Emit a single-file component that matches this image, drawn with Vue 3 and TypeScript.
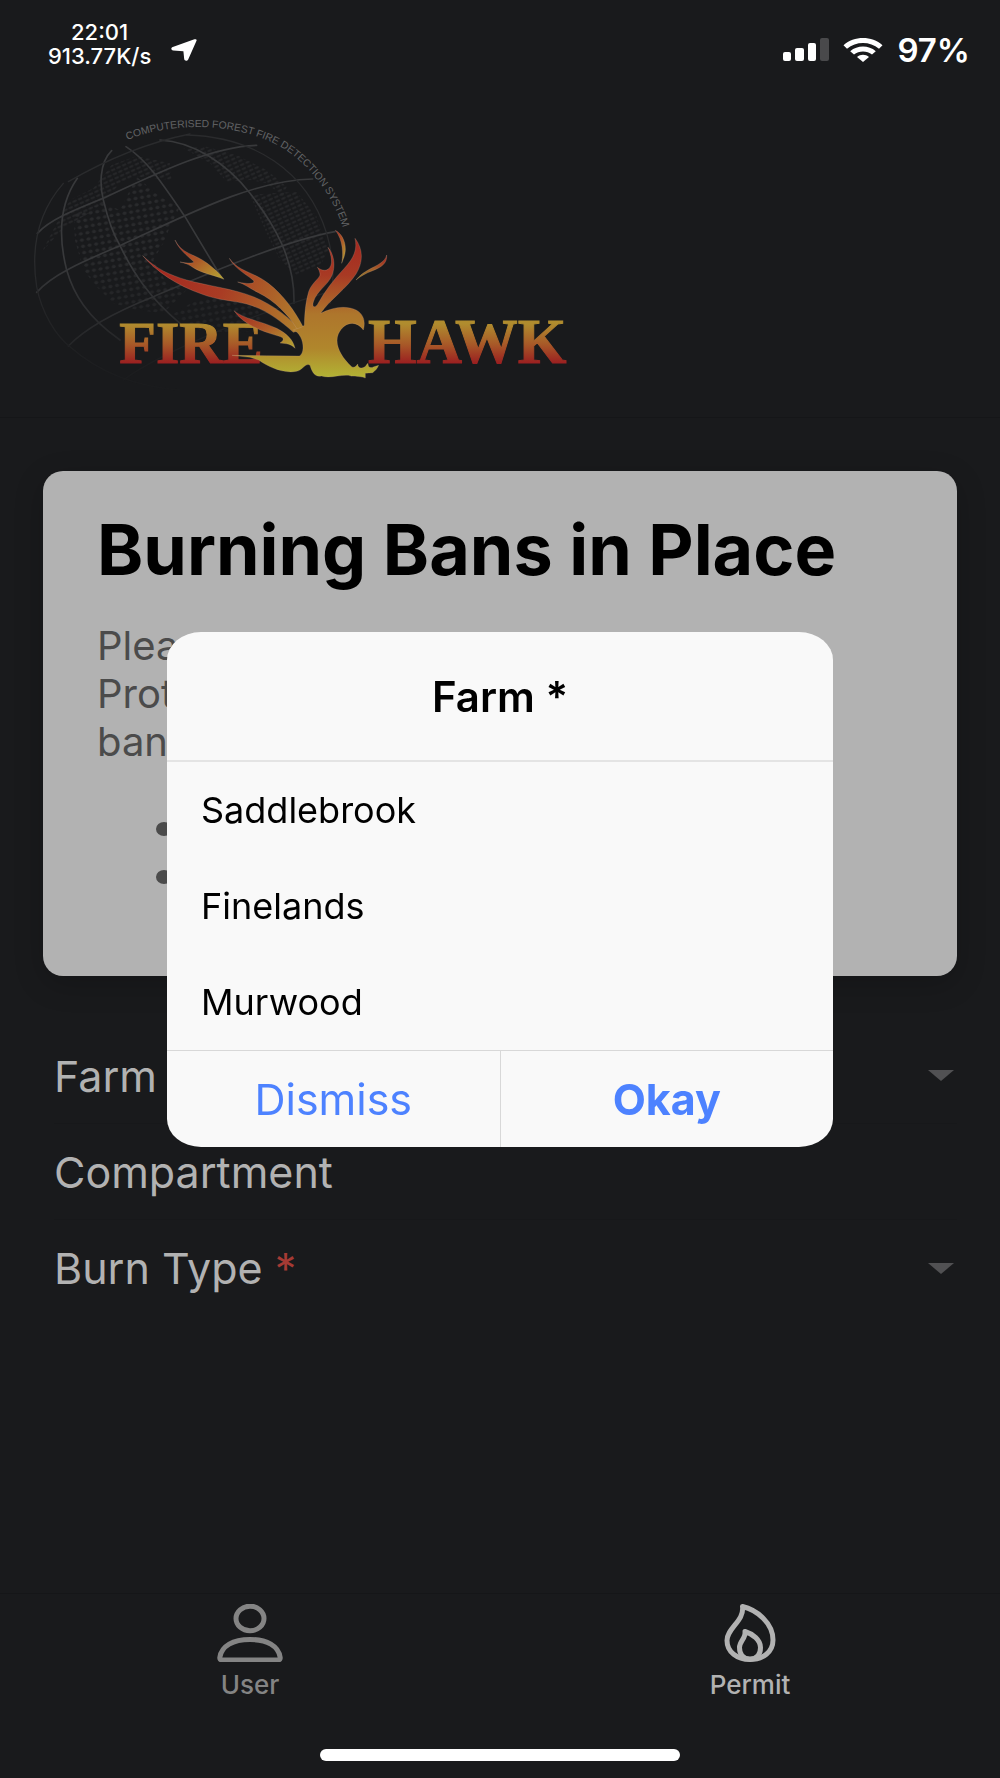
<script setup lang="ts">
import { ref } from 'vue'

interface Field {
  id: string
  label: string
  kind: 'select' | 'text'
  required: boolean
}

const fields: Field[] = [
  { id: 'farm', label: 'Farm', kind: 'select', required: false },
  { id: 'compartment', label: 'Compartment', kind: 'text', required: false },
  { id: 'burn-type', label: 'Burn Type', kind: 'select', required: true },
]

const farms: string[] = ['Saddlebrook', 'Finelands', 'Murwood']
const noticeLines: string[] = ['Plea', 'Prot', 'ban']

const chosenFarm = ref<string>('')
const dialogOpen = ref<boolean>(true)

function closeDialog(): void {
  dialogOpen.value = false
}
</script>

<template>
  <div class="screen">
    <div class="status">
      <div class="status-left">
        <div class="clock">
          <span>22:01</span>
          <span>913.77K/s</span>
        </div>
        <svg class="arrow" viewBox="0 0 26 22" aria-hidden="true">
          <path d="M25.5 1.8 17.2 20.4C16.3 22.3 13.4 22 13.2 20L12.4 12.3 2.2 11.4C-.2 11.1-.3 8.9 1.8 8L23.4.3C25 0 26 .6 25.5 1.8Z" fill="#fff" />
        </svg>
      </div>
      <div class="status-right">
        <svg class="bars" viewBox="0 0 46 24" aria-hidden="true">
          <rect x="0" y="14" width="8" height="9" rx="2" fill="#fff" />
          <rect x="12" y="10" width="9" height="13" rx="2" fill="#fff" />
          <rect x="25" y="5" width="8" height="18" rx="2" fill="#fff" />
          <rect x="37" y="0" width="9" height="23" rx="2" fill="#49494b" />
        </svg>
        <svg class="wifi" viewBox="0 0 40 24" aria-hidden="true">
          <path d="M.5 7.2C11-2.3 29-2.3 39.5 7.2L36 10.8C27 3.2 13 3.2 4 10.8Z" fill="#fff" />
          <path d="M7.2 13.2C14.5 7 25.5 7 32.8 13.2L29 16.6C24 12.5 16 12.5 11 16.6Z" fill="#fff" />
          <path d="M14 19C17.5 16 22.5 16 26 19L20 24Z" fill="#fff" />
        </svg>
        <span class="battery">97%</span>
      </div>
    </div>

    <header class="brand">
      <svg class="logo" viewBox="0 0 1740 900" role="img" aria-label="Firehawk">
        <defs>
          <linearGradient id="flame" gradientUnits="userSpaceOnUse" x1="0" y1="440" x2="0" y2="830">
            <stop offset="0" stop-color="#a52b21" />
            <stop offset=".22" stop-color="#a83a24" />
            <stop offset=".52" stop-color="#ae762c" />
            <stop offset=".78" stop-color="#b0862c" />
            <stop offset="1" stop-color="#b2b234" />
          </linearGradient>
          <linearGradient id="ember" gradientUnits="userSpaceOnUse" x1="368" y1="467" x2="840" y2="690">
            <stop offset="0" stop-color="#a3231f" />
            <stop offset=".5" stop-color="#a93c24" />
            <stop offset="1" stop-color="#b0802c" />
          </linearGradient>
          <linearGradient id="spark" x1="0" y1="0" x2="1" y2="1">
            <stop offset="0" stop-color="#a3231f" />
            <stop offset=".5" stop-color="#ad5a28" />
            <stop offset="1" stop-color="#b5a832" />
          </linearGradient>
          <linearGradient id="wisp" x1="1" y1="0" x2="0" y2="1">
            <stop offset="0" stop-color="#a3231f" />
            <stop offset=".5" stop-color="#a5602a" />
            <stop offset="1" stop-color="#8a7a28" />
          </linearGradient>
          <linearGradient id="letters" gradientUnits="userSpaceOnUse" x1="0" y1="672" x2="0" y2="792">
            <stop offset="0" stop-color="#b08c2e" />
            <stop offset=".5" stop-color="#a85a28" />
            <stop offset="1" stop-color="#9a1d20" />
          </linearGradient>
          <linearGradient id="fade" x1="0" y1="0" x2="0" y2="1">
            <stop offset=".5" stop-color="#fff" />
            <stop offset="1" stop-color="#000" />
          </linearGradient>
          <mask id="globe-mask" maskUnits="userSpaceOnUse" x="0" y="60" width="1000" height="840">
            <rect x="0" y="60" width="1000" height="840" fill="url(#fade)" />
          </mask>
          <pattern id="dots" width="20" height="19" patternUnits="userSpaceOnUse" patternTransform="rotate(-10)">
            <ellipse cx="10" cy="9" rx="6" ry="5" fill="#292a2c" />
          </pattern>
          <pattern id="dashes" width="18" height="13" patternUnits="userSpaceOnUse" patternTransform="rotate(-24)">
            <rect x="1" y="3" width="14" height="6" rx="3" fill="#27282a" />
          </pattern>
          <path id="motto" d="M322 120C480 56 690 72 812 160C895 225 948 310 974 400L980 430" />
        </defs>

        <g mask="url(#globe-mask)">
          <g>
            <path fill="url(#dashes)" d="M66 455L110 370 150 300 220 265 275 195 350 168 450 190 455 240 400 235 350 230 300 250 240 320 130 385Z" />
            <path fill="url(#dots)" d="M160 340L250 310 300 330 350 230 420 290 480 320 450 380 430 430 400 480 440 550 500 570 430 640 350 630 280 610 230 560 190 510 165 420Z" />
            <path fill="url(#dots)" d="M455 645L520 605 620 575 700 600 740 690 640 700 540 690Z" />
            <path fill="url(#dashes)" d="M490 145L560 140 650 165 740 210 800 260 790 290 740 250 690 240 620 245 570 190Z" />
            <path fill="url(#dashes)" d="M690 285L750 280 830 275 890 350 925 450 900 500 830 525 780 480 740 400Z" />
          </g>
          <g fill="none" stroke="#38393b" stroke-width="5" stroke-linecap="round">
            <path d="M318 140C380 180 420 240 495 350L600 525" />
            <path d="M275 152C236 190 240 260 250 300C262 350 278 400 300 437C340 520 390 595 480 670" />
            <path d="M172 235C120 310 112 400 140 510C160 580 200 650 300 720" />
            <path d="M420 120C520 125 620 190 690 280C765 375 825 480 822 610" />
            <path d="M52 400C90 360 150 335 250 295C400 225 570 140 710 136" />
            <path d="M50 577C100 520 200 480 300 437C500 345 700 240 878 237" />
            <path d="M145 738C200 680 300 630 400 590C520 540 780 425 945 395" />
          </g>
          <g fill="none" stroke="#2a2b2d" stroke-width="4" stroke-linecap="round">
            <path d="M130 250C60 330 30 430 50 560C65 640 110 710 150 740C240 820 350 860 480 870" />
            <path d="M500 105C700 110 860 210 920 400C944 480 942 560 930 610" />
            <path d="M145 245C240 190 370 130 510 102" />
            <path d="M310 840C420 760 700 640 930 575" />
          </g>
        </g>

        <text class="motto" fill="#626365">
          <textPath href="#motto">COMPUTERISED FOREST FIRE DETECTION SYSTEM</textPath>
        </text>

        <g fill="url(#letters)" stroke="url(#letters)" stroke-width="3">
          <text class="wordmark" x="298" y="790">FIRE</text>
          <text class="wordmark wide" x="1044" y="790">HAWK</text>
        </g>

        <g stroke="#d0a890" stroke-opacity=".35" stroke-width="2" stroke-linejoin="round">
          <path fill="url(#ember)" d="M368 467C410 508 450 525 500 540C560 557 640 566 700 590C760 614 810 655 842 690L820 697C780 660 730 625 680 612C640 602 590 600 545 582C470 556 410 515 368 467Z" />
          <path fill="url(#spark)" d="M465 420C488 465 520 458 562 490C588 510 602 524 612 538C580 524 545 520 520 503C506 492 495 490 480 486C500 489 517 491 522 486C500 466 475 446 465 420Z" />
          <path fill="url(#ember)" d="M628 475C655 515 700 515 745 550C790 585 824 632 850 682L832 688C806 645 764 602 715 578C690 566 675 552 653 546C682 552 702 553 702 543C690 530 645 508 628 475Z" />
          <path fill="url(#spark)" d="M642 632C672 657 720 662 770 685C800 700 820 720 825 745C814 732 800 731 780 729C796 718 792 712 768 706C720 692 670 672 642 632Z" />
          <path fill="url(#flame)" d="M820 690C832 684 842 686 853 676C854 640 856 610 866 575C876 546 902 534 900 522C899 514 896 508 892 502C902 510 914 514 924 508C942 494 934 466 924 442C944 466 946 500 936 526C924 556 890 572 880 606C876 620 882 626 892 614C914 574 940 540 972 506C1004 472 1012 446 1005 415C1030 448 1030 486 1008 522C980 566 928 600 902 640C930 626 960 618 990 624C1030 632 1038 662 1030 690C1010 660 972 664 955 702C942 734 964 772 995 800C1002 804 1008 800 1013 792C1014 804 1022 806 1032 802C1038 800 1038 794 1044 790C1044 802 1050 806 1062 800L1076 796C1072 806 1066 812 1058 818L1036 820 1036 834C1016 826 1000 832 985 826C960 824 930 836 904 828C884 832 876 816 870 796C858 786 846 812 830 814C790 822 744 800 716 780L690 772 636 766 740 767 838 768C852 762 852 730 842 712C836 700 830 694 820 690Z" />
          <path fill="url(#spark)" d="M946 391C964 400 978 424 976 452C974 472 968 480 965 490C970 466 970 420 946 391Z" />
          <path fill="url(#wisp)" d="M1100 465C1096 486 1070 496 1048 508C1030 518 1020 526 1008 540C1020 530 1036 520 1058 512C1084 502 1102 490 1100 465Z" />
        </g>
      </svg>
    </header>

    <main class="content">
      <section class="card">
        <h1>Burning Bans in Place</h1>
        <p>
          <template v-for="line in noticeLines" :key="line">{{ line }}<br /></template>
        </p>
        <ul>
          <li></li>
          <li></li>
        </ul>
      </section>

      <form class="fields" @submit.prevent>
        <div v-for="field in fields" :key="field.id" class="field">
          <label :for="field.id">
            {{ field.label }} <span v-if="field.required" class="required">*</span>
          </label>
          <template v-if="field.kind === 'select'">
            <select :id="field.id"></select>
            <svg class="caret" viewBox="0 0 26 11" aria-hidden="true">
              <path d="M0 0H26L13 11Z" fill="#515153" />
            </svg>
          </template>
          <input v-else :id="field.id" type="text" />
        </div>
      </form>
    </main>

    <nav class="tabs">
      <a href="#user" class="tab">
        <svg class="tab-icon" viewBox="0 0 66 58" aria-hidden="true">
          <g fill="none" stroke="currentColor" stroke-width="5" stroke-linejoin="round">
            <ellipse cx="33" cy="14.5" rx="14" ry="12.3" />
            <path d="M2.8 53.5C4.5 42 16 35.5 33 35.5S61.5 42 63.2 53.5C63.4 55 62.6 56 61 56H5C3.4 56 2.6 55 2.8 53.5Z" />
          </g>
        </svg>
        <span>User</span>
      </a>
      <a href="#permit" class="tab active">
        <svg class="tab-icon" viewBox="0 0 66 58" aria-hidden="true">
          <g fill="none" stroke="currentColor" stroke-width="5" stroke-linejoin="round">
            <path d="M25.5 2.5C40 6 56 19 56 36C56 48 46 55.5 33 55.5S10 48 10 36.5C10 24 27.5 17 25.5 2.5Z" />
            <path d="M28 27.5C36 30 43.5 36 43.5 43.5C43.5 51 39.5 55 33 55S22.5 51 22.5 43.5C22.5 37 29 34.5 28 27.5Z" />
          </g>
        </svg>
        <span>Permit</span>
      </a>
    </nav>
    <div class="home"><span></span></div>

    <div v-if="dialogOpen" class="overlay">
      <div class="dialog" role="dialog" aria-modal="true" aria-labelledby="dialog-title">
        <h2 id="dialog-title">Farm *</h2>
        <div class="options" role="radiogroup" aria-labelledby="dialog-title">
          <label v-for="farm in farms" :key="farm" class="option">
            <input v-model="chosenFarm" type="radio" name="farm-choice" :value="farm" />
            <span>{{ farm }}</span>
          </label>
        </div>
        <div class="actions">
          <button type="button" @click="closeDialog">Dismiss</button>
          <button type="button" class="primary" @click="closeDialog">Okay</button>
        </div>
      </div>
    </div>
  </div>
</template>

<style>
body {
  background: #191a1c;
}
</style>

<style scoped>
.screen {
  box-sizing: border-box;
  display: flex;
  flex-direction: column;
  min-height: 100vh;
  background: #191a1c;
  color: #b2b2b2;
  font-family: Inter, 'Liberation Sans', sans-serif;
}

.status {
  display: flex;
  justify-content: space-between;
  height: 80px;
  padding: 20px 30px 0 48px;
  color: #fff;
}

.status-left,
.status-right {
  display: flex;
  align-items: center;
  height: 48px;
}

.status-left {
  gap: 20px;
}

.status-right {
  gap: 14px;
  padding-top: 6px;
}

.clock {
  display: flex;
  flex-direction: column;
  align-items: center;
  font-size: 22px;
  font-weight: 500;
  line-height: 24px;
}

.arrow {
  width: 26px;
  height: 22px;
  margin-top: 12px;
}

.bars {
  width: 46px;
  height: 24px;
}

.wifi {
  width: 40px;
  height: 24px;
}

.battery {
  font-size: 33px;
  font-weight: 600;
  line-height: 32px;
}

.brand {
  height: 317px;
  padding-left: 20px;
  border-bottom: 1px solid #151618;
}

.logo {
  display: block;
  width: 580px;
  height: 300px;
}

.motto {
  font: 31px 'Liberation Sans', sans-serif;
}

.wordmark {
  font: bold 180px 'Liberation Serif', serif;
}

.wordmark.wide {
  font-size: 188px;
}

.content {
  flex: 1;
  padding: 53px 43px 0;
}

.card {
  box-sizing: border-box;
  min-height: 505px;
  padding: 43px 54px 0;
  border-radius: 20px;
  background: #b2b2b2;
  box-shadow: 0 8px 30px rgba(0, 0, 0, 0.2);
  color: #4b4b4b;
}

h1 {
  margin: 0;
  color: #000;
  font-size: 70px;
  font-weight: 700;
  line-height: 72px;
  white-space: nowrap;
}

p {
  margin: 36px 0 0;
  font-size: 40px;
  line-height: 48px;
}

ul {
  display: flex;
  flex-direction: column;
  gap: 34px;
  margin: 56px 0 0;
  padding: 0 0 0 59px;
  list-style: none;
}

li {
  width: 16px;
  height: 14px;
  border-radius: 50%;
  background: #4b4b4b;
}

.fields {
  margin: 52px 0 0 11px;
}

.field {
  box-sizing: border-box;
  display: flex;
  align-items: center;
  height: 96px;
  border-bottom: 1px solid #17181a;
}

.field:last-child {
  border-bottom: 0;
}

.field label {
  font-size: 43px;
  line-height: 48px;
  white-space: nowrap;
}

.required {
  color: #a53a34;
}

.field select,
.field input {
  flex: 1;
  min-width: 0;
  height: 60px;
  border: 0;
  outline: 0;
  background: transparent;
  color: inherit;
  font: inherit;
  font-size: 43px;
  appearance: none;
}

.caret {
  width: 26px;
  height: 11px;
  margin-right: 3px;
}

.tabs {
  display: flex;
  height: 114px;
  border-top: 1px solid #151618;
}

.tab {
  flex: 1;
  display: flex;
  flex-direction: column;
  align-items: center;
  gap: 9px;
  padding-top: 10px;
  color: #848484;
  font-size: 26px;
  font-weight: 500;
  line-height: 28px;
  text-decoration: none;
}

.tab.active {
  color: #b2b2b2;
}

.tab-icon {
  width: 66px;
  height: 58px;
}

.home {
  display: flex;
  justify-content: center;
  height: 29px;
  padding-top: 41px;
}

.home span {
  width: 36%;
  height: 12px;
  border-radius: 6px;
  background: #fff;
}

.overlay {
  position: fixed;
  inset: 0;
  display: flex;
  align-items: center;
  justify-content: center;
}

.dialog {
  width: 66.6%;
  overflow: hidden;
  border-radius: 34px / 28px;
  background: #f9f9f9;
  color: #000;
}

h2 {
  margin: 0;
  padding: 42px 0 40px;
  border-bottom: 2px solid #e4e4e4;
  font-size: 42px;
  font-weight: 600;
  line-height: 46px;
  text-align: center;
}

.option {
  display: flex;
  align-items: center;
  height: 96px;
  padding-left: 34px;
  font-size: 36px;
  line-height: 40px;
}

.option input {
  position: absolute;
  width: 1px;
  height: 1px;
  margin: 0;
  opacity: 0;
}

.actions {
  display: flex;
  border-top: 1px solid #d8d8d8;
}

.actions button {
  flex: 1;
  height: 96px;
  padding: 0;
  border: 0;
  background: transparent;
  color: #4d82ff;
  font-family: inherit;
  font-size: 43px;
  line-height: 48px;
}

.actions button + button {
  border-left: 1px solid #d8d8d8;
}

.actions .primary {
  font-weight: 700;
}
</style>
